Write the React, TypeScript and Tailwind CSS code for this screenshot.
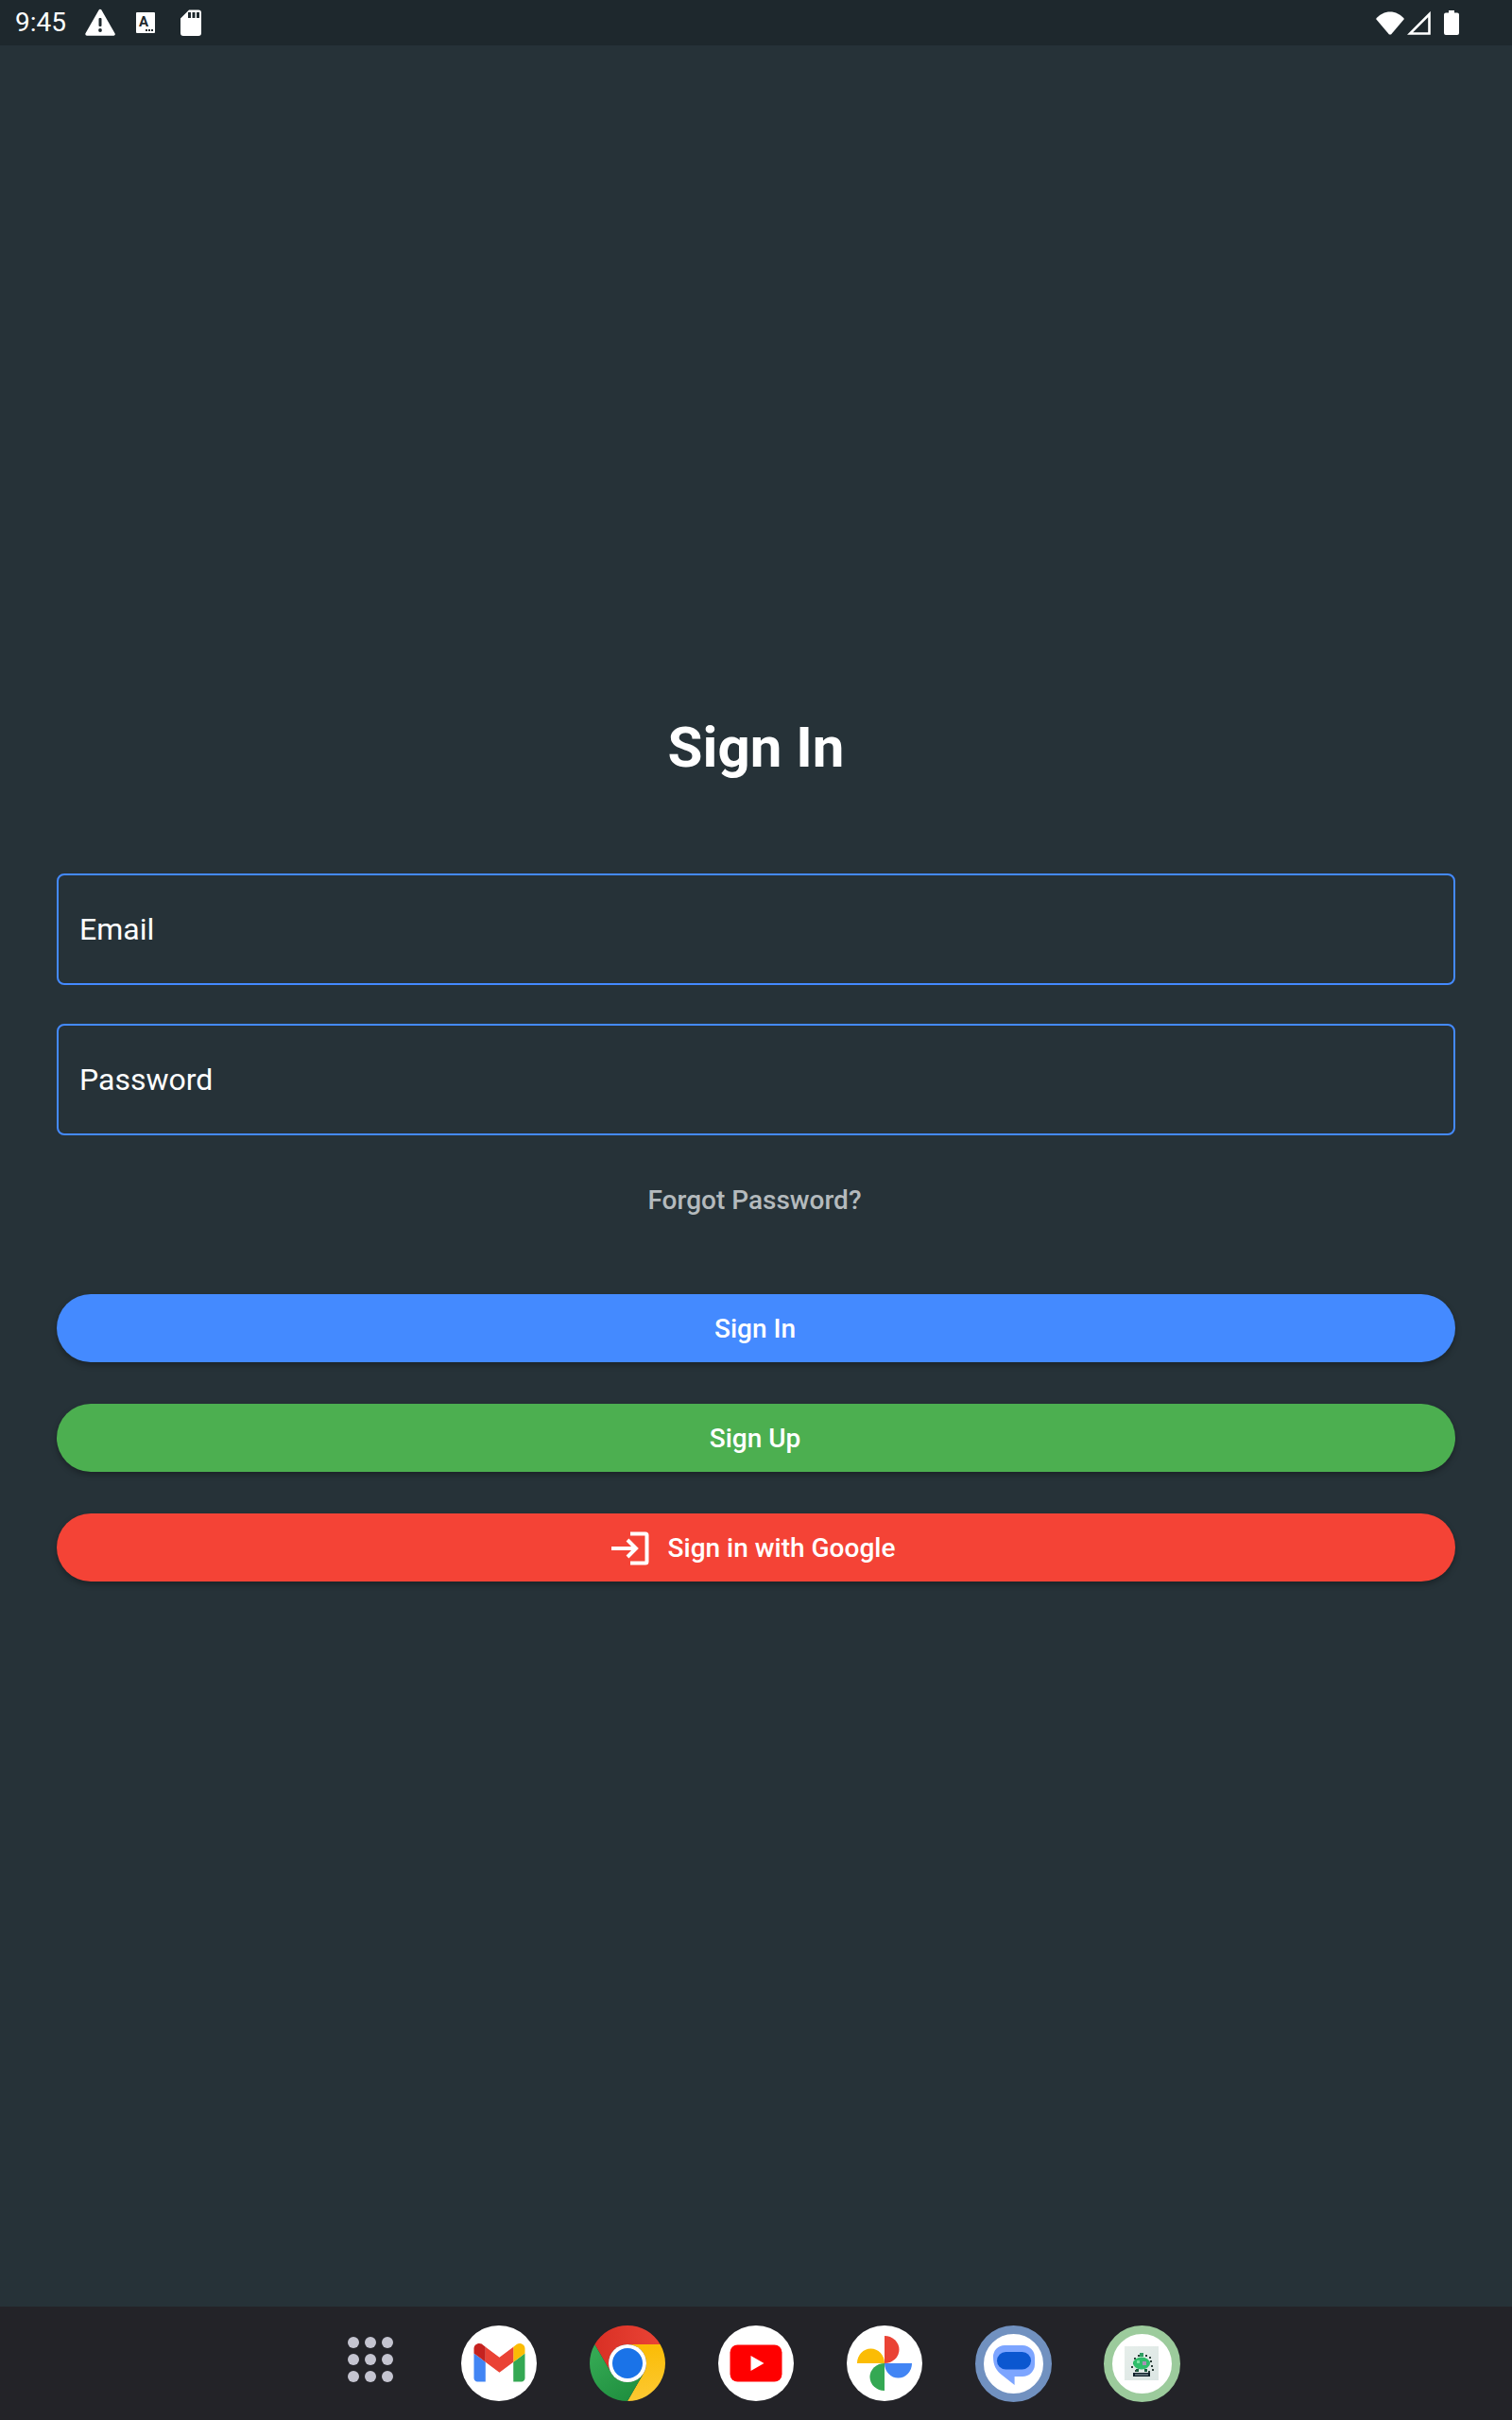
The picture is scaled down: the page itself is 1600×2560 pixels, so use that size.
function WarningIcon() {
  return (
    <svg width="32" height="30" viewBox="0 0 32 30" fill="none">
      <path d="M16 2.5 L30 27 H2 Z" fill="#fff" stroke="#fff" strokeWidth="3.5" strokeLinejoin="round" />
      <rect x="14.5" y="10" width="3" height="9" rx="1" fill="#1e282d" />
      <circle cx="16" cy="23" r="1.9" fill="#1e282d" />
    </svg>
  );
}

function KeyboardAIcon() {
  return (
    <div className="relative h-[22px] w-[20px] rounded-[1px] bg-white pl-[3px] pt-[3px] text-[15px] font-bold leading-[14px] text-[#1e282d] [font-family:Roboto,sans-serif]">
      A
      <div className="absolute bottom-[2px] right-[2px] flex gap-[1px]">
        <span className="h-[2px] w-[2px] bg-[#1e282d]" />
        <span className="h-[2px] w-[2px] bg-[#1e282d]" />
        <span className="h-[2px] w-[2px] bg-[#1e282d]" />
      </div>
    </div>
  );
}

function SdCardIcon() {
  return (
    <svg width="22" height="28" viewBox="0 0 22 28">
      <path
        d="M9 0.5 H19 A3 3 0 0 1 22 3.5 V25 A3 3 0 0 1 19 28 H3 A3 3 0 0 1 0 25 V9.5 Z"
        fill="#fff"
      />
      <rect x="8" y="3" width="3" height="6" fill="#1e282d" />
      <rect x="12.5" y="3" width="3" height="6" fill="#1e282d" />
      <rect x="17" y="3" width="3" height="6" fill="#1e282d" />
    </svg>
  );
}

function WifiIcon() {
  return (
    <svg width="30" height="25" viewBox="0 0 30 25">
      <path d="M0 8 C8 -2 22 -2 30 8 L16 24.5 H14 Z" fill="#fff" />
    </svg>
  );
}

function SignalIcon() {
  return (
    <svg width="25" height="25" viewBox="0 0 25 25" fill="none">
      <path d="M23.5 3 V23.5 H3 Z" stroke="#fff" strokeWidth="2.6" />
    </svg>
  );
}

function BatteryIcon() {
  return (
    <svg width="16" height="26" viewBox="0 0 16 26">
      <path
        d="M5 0 H11 V2.5 H14 A2 2 0 0 1 16 4.5 V24 A2 2 0 0 1 14 26 H2 A2 2 0 0 1 0 24 V4.5 A2 2 0 0 1 2 2.5 H5 Z"
        fill="#fff"
      />
    </svg>
  );
}

function GoogleLoginIcon() {
  return (
    <svg width="40" height="36" viewBox="0 0 40 36" fill="none" stroke="#fff" strokeWidth="4">
      <path d="M20 2.5 H36 A1.5 1.5 0 0 1 37.5 4 V32 A1.5 1.5 0 0 1 36 33.5 H20" />
      <path d="M0 18 H26" />
      <path d="M17 9 L26 18 L17 27" />
    </svg>
  );
}

function GmailIcon() {
  return (
    <svg width="80" height="80" viewBox="0 0 80 80" className="rounded-full bg-white">
      <g transform="translate(13.5 19) scale(0.6136) translate(-52 -42)">
        <path fill="#4285f4" d="M58 108h14V74L52 59v43c0 3.32 2.69 6 6 6" />
        <path fill="#34a853" d="M120 108h14c3.32 0 6-2.69 6-6V59l-20 15" />
        <path fill="#fbbc04" d="M120 48v26l20-15v-8c0-7.42-8.47-11.65-14.4-7.2" />
        <path fill="#ea4335" d="M72 74V48l24 18 24-18v26L96 92" />
        <path fill="#c5221f" d="M52 51v8l20 15V48l-5.6-4.2c-5.94-4.45-14.4-.22-14.4 7.2" />
      </g>
    </svg>
  );
}

function ChromeIcon() {
  return (
    <svg width="80" height="80" viewBox="0 0 80 80">
      <defs>
        <linearGradient id="chromeRed" x1="0" y1="0" x2="1" y2="0">
          <stop offset="0" stopColor="#d93025" />
          <stop offset="1" stopColor="#ea4335" />
        </linearGradient>
        <linearGradient id="chromeGreen" x1="0.8" y1="1" x2="0.2" y2="0.1">
          <stop offset="0" stopColor="#1e8e3e" />
          <stop offset="1" stopColor="#34a853" />
        </linearGradient>
        <linearGradient id="chromeYellow" x1="0.6" y1="1" x2="0.5" y2="0">
          <stop offset="0" stopColor="#fcc934" />
          <stop offset="1" stopColor="#fbbc04" />
        </linearGradient>
      </defs>
      <path d="M5.36 20 A40 40 0 0 1 74.64 20 H40 A20 20 0 0 0 22.68 50 Z" fill="url(#chromeRed)" />
      <path d="M74.64 20 A40 40 0 0 1 40 80 L57.32 50 A20 20 0 0 0 40 20 Z" fill="url(#chromeYellow)" />
      <path d="M40 80 A40 40 0 0 1 5.36 20 L22.68 50 A20 20 0 0 0 57.32 50 Z" fill="url(#chromeGreen)" />
      <circle cx="40" cy="40" r="20" fill="#fff" />
      <circle cx="40" cy="40" r="16" fill="#1a73e8" />
    </svg>
  );
}

function YoutubeIcon() {
  return (
    <svg width="80" height="80" viewBox="0 0 80 80" className="rounded-full bg-white">
      <rect x="12.5" y="20.5" width="55" height="39" rx="8" fill="#ff0000" />
      <path d="M34.5 32 L48.5 40 L34.5 48 Z" fill="#fff" />
    </svg>
  );
}

function PhotosIcon() {
  return (
    <svg width="80" height="80" viewBox="0 0 80 80" className="rounded-full bg-white">
      <path d="M40 11 A15.5 14.5 0 0 1 40 40 Z" fill="#ea4335" />
      <path d="M11 40 A14.5 15.5 0 0 1 40 40 Z" fill="#fbbc04" />
      <path d="M40 69 A15.5 14.5 0 0 1 40 40 Z" fill="#34a853" />
      <path d="M69 40 A14.5 15.5 0 0 1 40 40 Z" fill="#4285f4" />
    </svg>
  );
}

function MessagesIcon() {
  return (
    <div className="flex h-[81px] w-[81px] items-center justify-center rounded-full border-[9px] border-[#7191c0] bg-white">
      <svg width="63" height="63" viewBox="9 9 63 63">
        <path
          d="M31 21 H50 A13 13 0 0 1 63 34 V41 A13 13 0 0 1 50 54 H41.6 V63 L29 53 C22 48 19 42 19 33 A12 12 0 0 1 31 21 Z"
          fill="#7da5ff"
        />
        <rect x="23" y="28" width="36" height="18.5" rx="9.25" fill="#0b57d0" />
      </svg>
    </div>
  );
}

// the little pixel creature on the last dock icon
function PixelAppIcon() {
  const specks = [
    [10, 12], [14, 9], [18, 7], [22, 9], [26, 11], [9, 17], [27, 15], [28, 20], [7, 21], [11, 25], [25, 26], [29, 24],
  ];
  return (
    <div className="flex h-[81px] w-[81px] items-center justify-center rounded-full border-[9px] border-[#9ccb9c] bg-white">
      <svg width="36" height="36" viewBox="0 0 36 36">
        <defs>
          <linearGradient id="appBg" x1="0" y1="0" x2="1" y2="1">
            <stop offset="0" stopColor="#e6eeea" />
            <stop offset="1" stopColor="#dce6e4" />
          </linearGradient>
        </defs>
        <rect width="36" height="36" fill="url(#appBg)" />
        {specks.map(([x, y]) => (
          <rect key={`${x}-${y}`} x={x} y={y} width="2" height="2" fill="#2d3f3a" />
        ))}
        <ellipse cx="18" cy="18" rx="9" ry="6.5" fill="#2fbf6a" />
        <rect x="16" y="7" width="4" height="4" fill="#2f9e62" />
        <rect x="13" y="15" width="3" height="3" fill="#7ce3a4" />
        <rect x="19" y="16" width="4" height="4" fill="#a98fb5" />
        <rect x="12" y="24" width="3" height="3" fill="#1d5b3e" />
        <rect x="21" y="24" width="3" height="3" fill="#1d5b3e" />
        <rect x="9" y="28" width="18" height="4" fill="#10202a" />
        <rect x="11" y="29.5" width="14" height="1" fill="#9fb3b5" />
      </svg>
    </div>
  );
}

const dockIcons = [GmailIcon, ChromeIcon, YoutubeIcon, PhotosIcon, MessagesIcon, PixelAppIcon];

const buttons = [
  { label: "Sign In", color: "bg-[#448aff] pr-[2px]" },
  { label: "Sign Up", color: "bg-[#4caf50] pr-[2px]" },
  { label: "Sign in with Google", color: "bg-[#f44336] pr-[6px]", icon: true },
];

export default function App() {
  return (
    <div className="flex h-[2560px] w-[1600px] flex-col bg-[#263238] text-white [font-family:Roboto,sans-serif]">
      <div className="flex h-12 shrink-0 items-center justify-between bg-[#1e282d] pl-4 pr-[56px]">
        <div className="flex items-center">
          <span className="mr-[20px] text-[28px] leading-none">9:45</span>
          <WarningIcon />
          <div className="ml-[22px] mr-[27px]">
            <KeyboardAIcon />
          </div>
          <SdCardIcon />
        </div>
        <div className="flex items-center gap-[3px]">
          <WifiIcon />
          <SignalIcon />
          <div className="ml-[11px]">
            <BatteryIcon />
          </div>
        </div>
      </div>

      <main className="flex flex-1 flex-col px-[60px] pt-[709px]">
        <h1 className="text-center text-[60px] font-bold leading-[68px]">Sign In</h1>

        <div className="mt-[99px] flex flex-col gap-[41px]">
          {["Email", "Password"].map((label) => (
            <div
              key={label}
              className="flex h-[118px] items-center rounded-lg border-2 border-[#448aff] px-[22px] text-[32px] leading-none"
            >
              {label}
            </div>
          ))}
        </div>

        <p className="mt-[52px] pr-[3px] text-center text-[28px] font-medium leading-[34px] text-[#b4babd]">Forgot Password?</p>

        <div className="mt-[82px] flex flex-col gap-11">
          {buttons.map((b) => (
            <button
              key={b.label}
              className={`flex h-[72px] items-center justify-center gap-5 rounded-full pt-[2px] text-[28px] font-medium shadow-[0_3px_6px_rgba(0,0,0,0.3)] ${b.color}`}
            >
              {b.icon && <GoogleLoginIcon />}
              {b.label}
            </button>
          ))}
        </div>
      </main>

      <div className="flex h-[120px] shrink-0 items-center justify-center bg-[#232328]">
        <div className="mb-2 flex w-[136px] justify-center">
          <div className="grid grid-cols-3 gap-[6px]">
            {Array.from({ length: 9 }).map((_, i) => (
              <span key={i} className="h-3 w-3 rounded-full bg-[#c4c4d0]" />
            ))}
          </div>
        </div>
        {dockIcons.map((Icon, i) => (
          <div key={i} className="flex w-[136px] justify-center">
            <Icon />
          </div>
        ))}
      </div>
    </div>
  );
}
